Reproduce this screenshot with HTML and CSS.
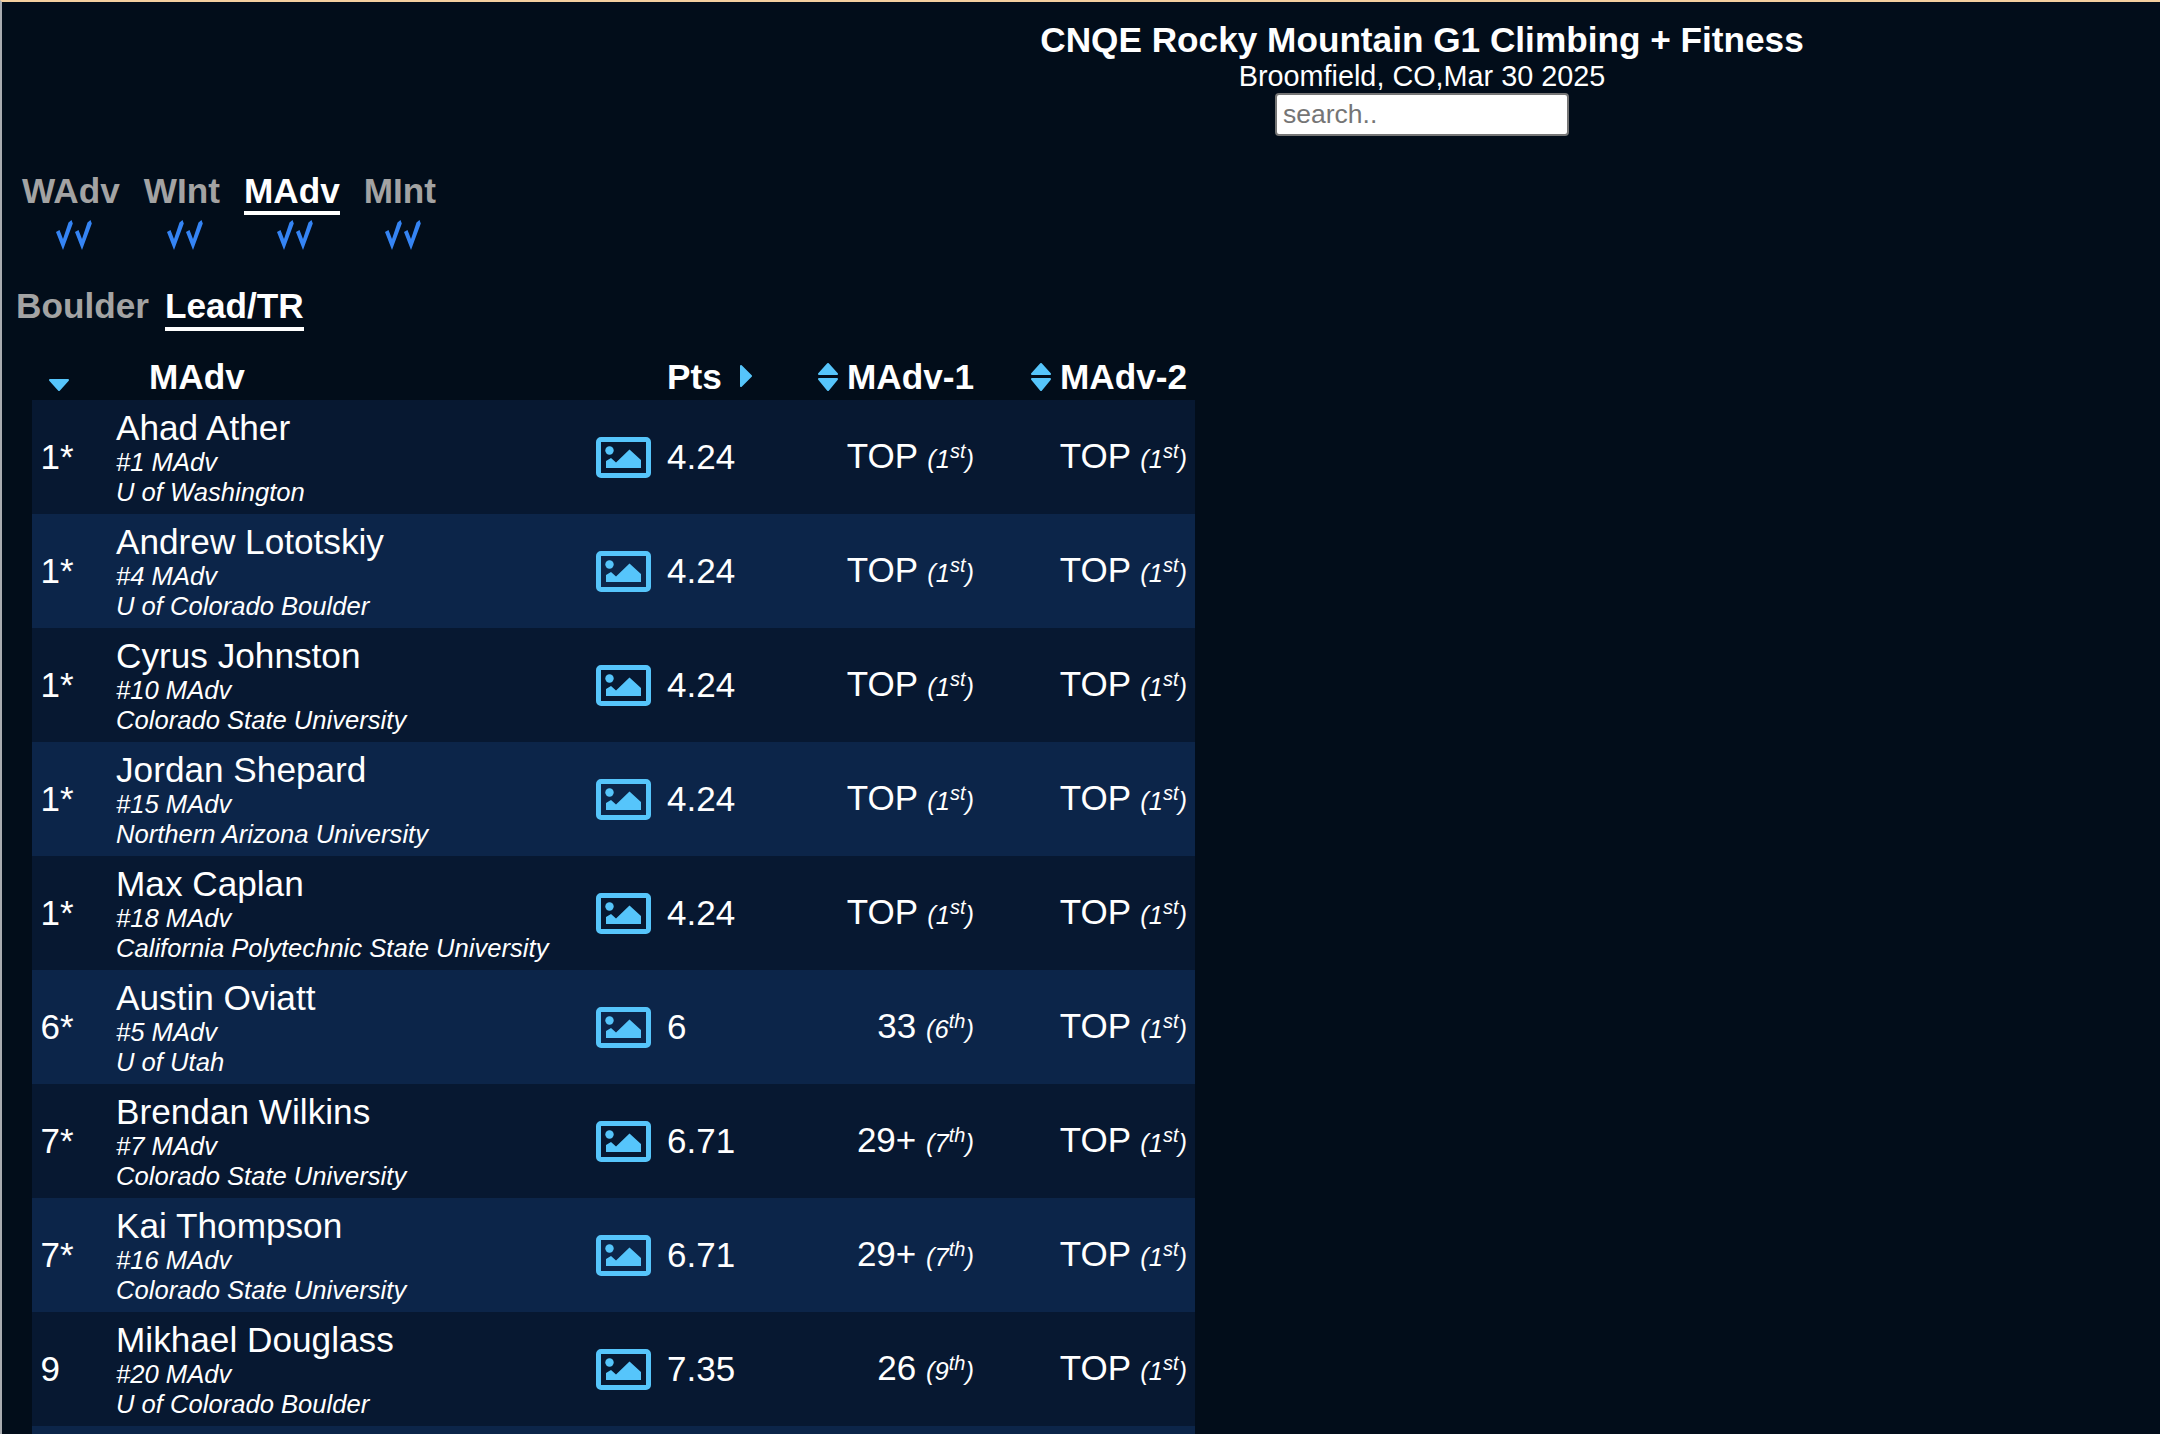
FILE: index.html
```html
<!DOCTYPE html>
<html lang="en">
<head>
<meta charset="utf-8">
<title>CNQE Rocky Mountain G1 Climbing + Fitness</title>
<link rel="stylesheet" href="styles.css">
</head>
<body>
<svg class="defs" width="0" height="0" aria-hidden="true">
  <symbol id="pic" viewBox="0 0 55 41">
    <rect x="2.5" y="2.5" width="50" height="36" rx="2.5" fill="none" stroke="currentColor" stroke-width="5"/>
    <circle cx="13.5" cy="13.5" r="4.2" fill="currentColor"/>
    <polygon points="10,31 10,24 15,21 20,25.5 33.5,12.5 45,23 45,31" fill="currentColor"/>
  </symbol>
  <symbol id="checks" viewBox="0 0 36 30">
    <polygon points="0,12 3.5,10 7,19 12.5,2.5 15.5,0 16.8,3.5 7,30" fill="currentColor"/>
    <polygon points="19,12 22.5,10 26,19 31.5,2.5 34.5,0 35.8,3.5 26,30" fill="currentColor"/>
  </symbol>
</svg>
<header class="event">
  <h1 class="event-title">CNQE Rocky Mountain G1 Climbing + Fitness</h1>
  <div class="event-sub">Broomfield, CO,Mar 30 2025</div>
  <input class="search" type="text" placeholder="search..">
</header>
<nav class="cats">
  <div class="cat"><span class="cat-label">WAdv</span><svg class="check"><use href="#checks"/></svg></div>
  <div class="cat"><span class="cat-label">WInt</span><svg class="check"><use href="#checks"/></svg></div>
  <div class="cat"><span class="cat-label active">MAdv</span><svg class="check"><use href="#checks"/></svg></div>
  <div class="cat"><span class="cat-label">MInt</span><svg class="check"><use href="#checks"/></svg></div>
</nav>
<nav class="disc">
  <span class="disc-label">Boulder</span>
  <span class="disc-label active">Lead/TR</span>
</nav>
<table class="results">
  <colgroup><col class="c-rank"><col class="c-name"><col class="c-pic"><col class="c-pts"><col class="c-m"><col class="c-m"></colgroup>
  <thead>
    <tr>
      <th class="rank-h"><svg class="caret-down" viewBox="0 0 20 12"><polygon points="1,1 19,1 10,11"/></svg></th>
      <th class="name-h">MAdv</th>
      <th></th>
      <th class="pts-h">Pts<svg class="caret-right" viewBox="0 0 12 22"><polygon points="1,1 11,11 1,21"/></svg></th>
      <th class="m-h"><svg class="sort" viewBox="0 0 20 28"><polygon points="10,1 19,11 1,11"/><polygon points="1,16 19,16 10,27"/></svg>MAdv-1</th>
      <th class="m-h"><svg class="sort" viewBox="0 0 20 28"><polygon points="10,1 19,11 1,11"/><polygon points="1,16 19,16 10,27"/></svg>MAdv-2</th>
    </tr>
  </thead>
  <tbody>
    <tr><td class="rank">1*</td><td class="name"><div class="who">Ahad Ather</div><div class="sub">#1 MAdv</div><div class="sub">U of Washington</div></td><td class="pic"><svg class="pic-ico"><use href="#pic"/></svg></td><td class="pts">4.24</td><td class="m">TOP <i class="pl">(1<sup>st</sup>)</i></td><td class="m">TOP <i class="pl">(1<sup>st</sup>)</i></td></tr>
    <tr><td class="rank">1*</td><td class="name"><div class="who">Andrew Lototskiy</div><div class="sub">#4 MAdv</div><div class="sub">U of Colorado Boulder</div></td><td class="pic"><svg class="pic-ico"><use href="#pic"/></svg></td><td class="pts">4.24</td><td class="m">TOP <i class="pl">(1<sup>st</sup>)</i></td><td class="m">TOP <i class="pl">(1<sup>st</sup>)</i></td></tr>
    <tr><td class="rank">1*</td><td class="name"><div class="who">Cyrus Johnston</div><div class="sub">#10 MAdv</div><div class="sub">Colorado State University</div></td><td class="pic"><svg class="pic-ico"><use href="#pic"/></svg></td><td class="pts">4.24</td><td class="m">TOP <i class="pl">(1<sup>st</sup>)</i></td><td class="m">TOP <i class="pl">(1<sup>st</sup>)</i></td></tr>
    <tr><td class="rank">1*</td><td class="name"><div class="who">Jordan Shepard</div><div class="sub">#15 MAdv</div><div class="sub">Northern Arizona University</div></td><td class="pic"><svg class="pic-ico"><use href="#pic"/></svg></td><td class="pts">4.24</td><td class="m">TOP <i class="pl">(1<sup>st</sup>)</i></td><td class="m">TOP <i class="pl">(1<sup>st</sup>)</i></td></tr>
    <tr><td class="rank">1*</td><td class="name"><div class="who">Max Caplan</div><div class="sub">#18 MAdv</div><div class="sub">California Polytechnic State University</div></td><td class="pic"><svg class="pic-ico"><use href="#pic"/></svg></td><td class="pts">4.24</td><td class="m">TOP <i class="pl">(1<sup>st</sup>)</i></td><td class="m">TOP <i class="pl">(1<sup>st</sup>)</i></td></tr>
    <tr><td class="rank">6*</td><td class="name"><div class="who">Austin Oviatt</div><div class="sub">#5 MAdv</div><div class="sub">U of Utah</div></td><td class="pic"><svg class="pic-ico"><use href="#pic"/></svg></td><td class="pts">6</td><td class="m">33 <i class="pl">(6<sup>th</sup>)</i></td><td class="m">TOP <i class="pl">(1<sup>st</sup>)</i></td></tr>
    <tr><td class="rank">7*</td><td class="name"><div class="who">Brendan Wilkins</div><div class="sub">#7 MAdv</div><div class="sub">Colorado State University</div></td><td class="pic"><svg class="pic-ico"><use href="#pic"/></svg></td><td class="pts">6.71</td><td class="m">29+ <i class="pl">(7<sup>th</sup>)</i></td><td class="m">TOP <i class="pl">(1<sup>st</sup>)</i></td></tr>
    <tr><td class="rank">7*</td><td class="name"><div class="who">Kai Thompson</div><div class="sub">#16 MAdv</div><div class="sub">Colorado State University</div></td><td class="pic"><svg class="pic-ico"><use href="#pic"/></svg></td><td class="pts">6.71</td><td class="m">29+ <i class="pl">(7<sup>th</sup>)</i></td><td class="m">TOP <i class="pl">(1<sup>st</sup>)</i></td></tr>
    <tr><td class="rank">9</td><td class="name"><div class="who">Mikhael Douglass</div><div class="sub">#20 MAdv</div><div class="sub">U of Colorado Boulder</div></td><td class="pic"><svg class="pic-ico"><use href="#pic"/></svg></td><td class="pts">7.35</td><td class="m">26 <i class="pl">(9<sup>th</sup>)</i></td><td class="m">TOP <i class="pl">(1<sup>st</sup>)</i></td></tr>
    <tr class="peek"><td colspan="6"></td></tr>
  </tbody>
</table>
</body>
</html>
```
FILE: styles.css
```css
html { overflow: hidden; }
html, body { height: 100%; }
body {
  margin: 0;
  background: #020d1a;
  border-top: 2px solid #f4cf9f;
  border-left: 2px solid #a9acb0;
  box-sizing: border-box;
  color: #fff;
  font-family: "Liberation Sans", Arial, sans-serif;
  overflow: hidden;
}
.defs { position: absolute; }

.event {
  display: flex;
  flex-direction: column;
  align-items: center;
  padding-left: 682px;
  padding-top: 18px;
}
.event-title { margin: 0; font-size: 35.2px; line-height: 40px; font-weight: 700; }
.event-sub { font-size: 28.8px; line-height: 33px; }
.search {
  width: 294px;
  height: 43px;
  box-sizing: border-box;
  margin: 0;
  padding: 0 6px;
  background: #fff;
  border: 2px solid #767676;
  border-radius: 4px;
  font: 26.5px "Liberation Sans", Arial, sans-serif;
}
.search::placeholder { color: #757575; opacity: 1; }

.cats { display: flex; gap: 24px; padding: 35px 0 0 20px; }
.cat { display: flex; flex-direction: column; }
.cat-label { font-size: 35.2px; line-height: 40px; font-weight: 700; color: #a3a3a3; border-bottom: 4px solid transparent; }
.cat-label.active, .disc-label.active { color: #fff; border-bottom-color: #fff; }
.check { width: 36px; height: 30px; margin: 5px 0 0 7px; align-self: center; color: #3584f4; display: block; }

.disc { display: flex; gap: 16px; padding: 36px 0 0 14px; align-items: flex-start; }
.disc-label { font-size: 35.2px; line-height: 40px; font-weight: 700; color: #a3a3a3; padding-bottom: 1px; border-bottom: 4px solid transparent; }

.results {
  margin: 22px 0 0 30px;
  width: 1163px;
  table-layout: fixed;
  border-collapse: collapse;
}
.c-rank { width: 84px; }
.c-name { width: 480px; }
.c-pic { width: 71px; }
.c-pts { width: 102px; }
.c-m { width: 213px; }

thead tr { height: 47px; }
th { padding: 0; font-size: 35.2px; line-height: 40px; font-weight: 700; text-align: left; vertical-align: bottom; padding-bottom: 3px; white-space: nowrap; }
.rank-h { padding-left: 17px; }
.name-h { padding-left: 33px; }
.m-h { text-align: right; padding-right: 8px; }
.caret-down { width: 20px; height: 12px; fill: #56c5fb; stroke: #56c5fb; stroke-width: 2; stroke-linejoin: round; display: inline-block; vertical-align: -2px; }
.caret-right { width: 12px; height: 22px; fill: #56c5fb; stroke: #56c5fb; stroke-width: 2; stroke-linejoin: round; margin-left: 18px; vertical-align: 2px; }
.sort { width: 20px; height: 28px; fill: #56c5fb; stroke: #56c5fb; stroke-width: 2; stroke-linejoin: round; margin-right: 9px; vertical-align: -2px; }

tbody tr { height: 114px; background: #071831; }
tbody tr:nth-child(even) { background: #0c2549; }
td { padding: 0; font-size: 35px; line-height: 40px; vertical-align: middle; white-space: nowrap; }
.rank { padding-left: 8.5px; }
.name { padding-bottom: 1px; }
.who { font-size: 35.2px; line-height: 41px; }
.sub { font-size: 25.6px; line-height: 29px; font-style: italic; }
.sub + .sub { margin-top: 1px; }
.pic { line-height: 0; }
.pic-ico { width: 55px; height: 41px; color: #56c5fb; display: block; }
.m { text-align: right; padding-right: 8px; }
.pl { font-size: 25.6px; }
.pl sup { font-size: 20px; line-height: 0; vertical-align: 10px; }
```
